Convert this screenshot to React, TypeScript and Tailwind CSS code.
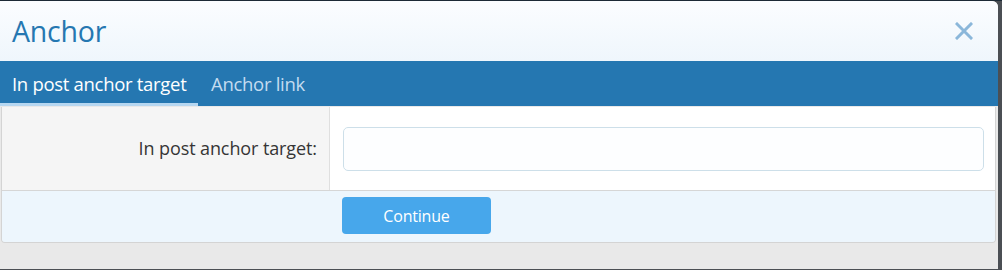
export default function App() {
  return (
    <div className="h-[270px] w-[1002px] overflow-hidden bg-[#4b4f54] font-['Open_Sans',sans-serif]">
      <div className="h-px w-full bg-[#1c2a36]" />
      <div className="w-[998px] overflow-hidden rounded-tr-[6px] bg-[#e9e9e9]">
        <div className="flex h-[60px] items-center justify-between bg-gradient-to-b from-[#fbfdff] to-[#eff6fc] pl-3 pr-[25px]">
          <h1 className="text-[28.5px] leading-none tracking-[-0.2px] text-[#2577b1]">Anchor</h1>
          <svg width="18" height="18" viewBox="0 0 18 18" className="text-[#8bb7da]">
            <path d="M2 2 L16 16 M16 2 L2 16" stroke="currentColor" strokeWidth="3" strokeLinecap="square" />
          </svg>
        </div>
        <div className="flex h-[45px] bg-[#2577b1] text-[18.5px] tracking-[-0.3px]">
          <div className="flex w-[198px] items-center border-b-[3px] border-[#b6d7f1] pl-3 pt-[3px] text-white">
            In post anchor target
          </div>
          <div className="flex items-center pl-[13px] text-[#c4dcf0]">Anchor link</div>
        </div>
        <div className="px-px pb-[26px] pt-px">
          <div className="w-[995px] overflow-hidden rounded-b-[4px] border border-t-0 border-[#d4d4d4]">
            <div className="flex h-[83px]">
              <div className="flex w-[328px] items-center justify-end border-r border-[#dfdfdf] bg-[#f5f5f5] pr-[12px] text-[18px] tracking-[-0.1px] text-[#353535]">
                In post anchor target:
              </div>
              <div className="flex flex-1 items-center bg-white pl-[13px] pr-[11px]">
                <input className="h-[44px] w-full rounded-[5px] border border-[#cddfe9] bg-[#fdfeff] outline-none" />
              </div>
            </div>
            <div className="h-[52px] border-t border-[#d6d6d6] bg-[#edf6fd] pl-[340px] pt-[6px]">
              <button className="h-[37px] w-[149px] rounded-[4px] bg-[#47a7eb] text-[16px] tracking-[-0.2px] text-white">
                Continue
              </button>
            </div>
          </div>
        </div>
      </div>
    </div>
  );
}
